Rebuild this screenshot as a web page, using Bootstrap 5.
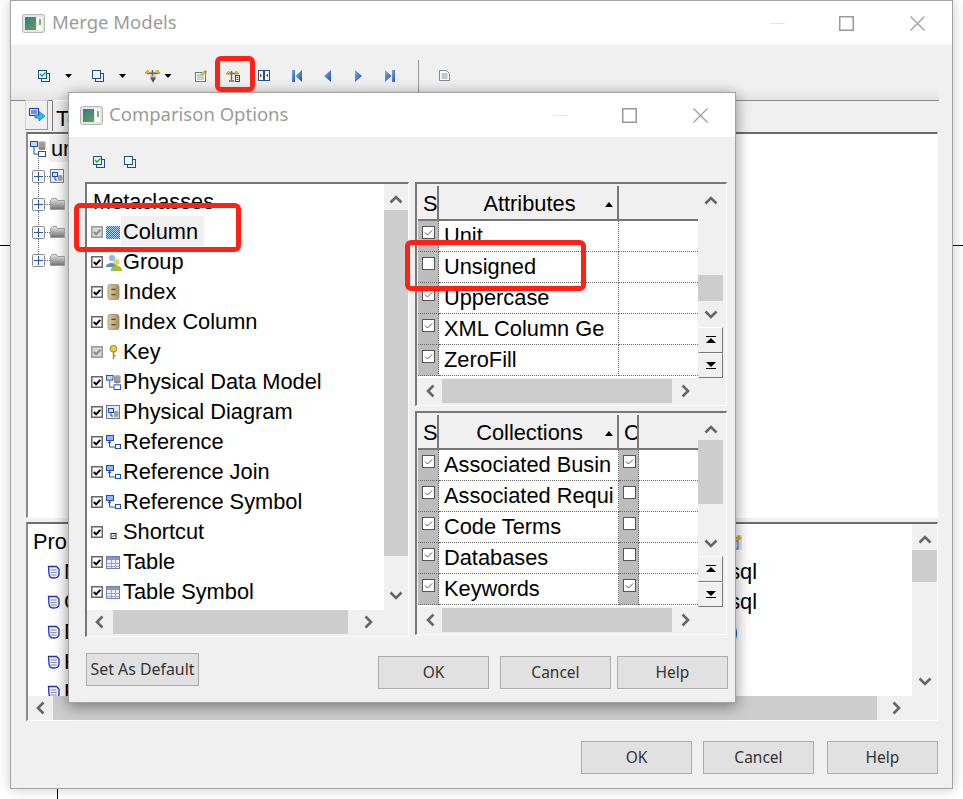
<!doctype html>
<html lang="en">
<head>
<meta charset="utf-8">
<title>Merge Models</title>
<link rel="stylesheet" href="https://cdn.jsdelivr.net/npm/bootstrap@5.3.0/dist/css/bootstrap.min.css">
<style>
html,body{margin:0;background:#fff;overflow:hidden;height:799px;}
body{font-family:"Liberation Sans",Arial,sans-serif;font-size:21.8px;line-height:1;color:#000;}
svg{display:block;flex:none;overflow:visible;}
.deskline{position:absolute;background:#000;}
.dl-v1{left:57px;top:0;width:1px;height:3px;}
.dl-v2{left:57px;top:788px;width:1px;height:11px;}
.dl-h1{left:0;top:245px;width:11px;height:1px;}
.dl-h2{left:952px;top:245px;width:11px;height:1px;}
.appwin{position:absolute;background:#f0f0f0;border:1px solid #a3a3a3;box-shadow:0 0 12px rgba(0,0,0,.22);}
.w-outer{left:10px;top:0;width:943px;height:789px;}
.w-dialog{left:68px;top:92px;width:668px;height:611px;box-shadow:0 3px 14px rgba(0,0,0,.45);}
.titlebar{height:44px;background:#fff;padding:0 27px 2px 11px;color:#9b9b9b;font-family:"Noto Sans",sans-serif;font-size:18.5px;flex:none;}
.titlebar svg{margin-top:2px;}
.ttl{margin-left:7px;}
.w-dialog .ttl{margin-left:6px;}
.wbtns{margin-left:auto;}
.wb-max{margin-left:54px;}
.wb-cls{margin-left:56px;}
.outer-tb{display:grid;height:56px;padding:6px 0 0 27px;align-items:center;margin-right:13px;border-bottom:1px solid #8a8a8a;
 grid-template-columns:27px 27px 27px 26px 19px 31px 31px 32px 34px 32px 31px 30px 33px 21px 1fr;
 background:linear-gradient(#f0f0f0 80%,#e4e4e4);}
.tbsep{width:1px;height:32px;background:#9a9a9a;align-self:start;margin-top:9px;}
.tabrow{height:31px;margin-left:14px;}
.tabtoggle{width:23px;height:30px;margin-top:-1px;background:#f0f0f0;border:1px solid #d0d0d0;border-right-color:#999;border-bottom-color:#999;}
.tabitem{margin-left:4px;height:31px;width:60px;margin-top:-1px;border-left:1px solid #777;border-top:1px solid #fff;padding:7px 0 0 3px;background:#f0f0f0;overflow:hidden;}
.pane{margin:0 14px 0 15px;border-top:2px solid #6c6c6c;border-left:2px solid #8b8b8b;border-right:1px solid #fff;border-bottom:1px solid #fff;}
.treepane{height:386px;background:#fff;padding:1px 0 0 0;}
.propspane{height:199px;margin-top:4px;}
.trow{height:28px;position:relative;padding-left:2px;}
.troot{height:27px;}
.troot .tlabel{background:#f0f0f0;height:27px;line-height:28px;padding:0 2px;margin-left:3px;}
.tchild{padding-left:4px;}
.tchild::before{content:"";position:absolute;left:10px;top:-7px;height:28px;border-left:1px dotted #666;}
.tchild::after{content:"";position:absolute;left:17px;top:14px;width:5px;border-top:1px dotted #666;}
.tlast::before{height:21px;}
.tchild svg{position:relative;z-index:1;}
.ticon{margin-left:5px;}
.propmain{min-height:0;}
.proplist{min-width:0;overflow:hidden;background:#fff;padding-top:3px;}
.prophead{height:30px;padding-left:5px;line-height:30px;width:714px;}
.proprow{height:30px;padding-left:19px;gap:4px;}
.pname{width:693px;}
.pval3{margin-right:19px;}
.vbar{background:#f0f0f0;flex:none;}
.vb-list{width:24px;}
.vb-grid{width:25px;}
.vb-props{width:25px;}
.arr{height:30px;flex:none;}
.arr-g{height:28px;}
.arr-h{width:24px;height:100%;flex:none;}
.arr-s{height:26px;}
.thumb{background:#cdcdcd;flex:none;}
.th-list{height:346px;margin-top:-4px;}
.th-g1{height:26px;margin-top:61px;}
.th-g2{height:64px;margin-top:-3px;}
.th-props{height:32px;margin-top:-4px;}
.dn-auto{margin-top:auto;}
.stepper{height:25.5px;width:25px;border-top:1px solid #fff;border-right:1px solid #777;border-bottom:1px solid #777;border-left:1px solid #eee;flex:none;}
.hbar{flex:none;height:24px;background:#f0f0f0;}
.hth-list{width:235px;margin-left:2px;}
.hth-grid{width:230px;}
.hth-props{width:824px;margin-left:1px;}
.ha-list{margin-left:8px;}
.ha-grid{margin-left:1px;}
.ha-props{margin-left:7px;}
.diatb{height:45px;padding:19px 0 0 24px;gap:19px;}
.diabody{padding:0 8px 0 16px;gap:6px;height:455px;}
.listframe{width:324px;height:455px;border-top:2px solid #777;border-left:2px solid #777;border-right:1px solid #fff;border-bottom:1px solid #fff;}
.listmain{height:426px;}
.listwhite{width:297px;background:#fff;padding-top:2px;overflow:hidden;}
.lhead{height:30px;line-height:32px;padding-left:6px;}
.lrow{height:30px;padding-left:4px;}
.lrow svg{margin-top:2px;}
.lck{margin-right:3px;}
.lico{width:15px;}
.lico-px{margin-right:1px;}
.lico-grp{width:16px;margin-right:-1px;}
.lico-sh{margin-top:9px !important;}
.ltext{height:30px;line-height:32px;padding:0 6px 0 2px;}
.lsel{background:#f0f0f0;}
.rightcol{width:312px;gap:5px;}
.gridframe{border-top:2px solid #777;border-left:2px solid #777;border-right:1px solid #fff;border-bottom:1px solid #fff;padding:2px 3px 2px 1px;}
.gridmain{height:192px;margin-bottom:1px;}
.gridbody{width:280px;background:#fff;overflow:hidden;}
.g-a,.g-c{display:grid;}
.g-a{grid-template-columns:21px 180px 1fr;}
.g-c{grid-template-columns:21px 180px 20px 1fr;}
.ghead{height:35px;background:#f0f0f0;border-bottom:2px solid #777;}
.ghead>div{border-right:2px solid #777;height:33px;line-height:36px;overflow:hidden;white-space:nowrap;}
.ghead>div:last-child{border-right:0;}
.hS{padding-left:5px;}
.hName{position:relative;text-align:center;padding-left:3px;}
.sorttri{position:absolute;right:4px;top:16px;width:0;height:0;border-left:4.5px solid transparent;border-right:4.5px solid transparent;border-bottom:5px solid #000;}
.grow>div{height:31px;border-bottom:1px dotted #666;border-right:1px dotted #666;}
.grow>div:last-child{border-right:0;}
.cgrey{background:#bcbcbc;padding:5px 0 0 4px;}
.cname{line-height:29px;padding-left:5px;white-space:nowrap;overflow:hidden;}
.diafoot{padding:16px 7px 0 17px;}
.uibtn{background:#e1e1e1;border:1px solid #adadad;border-radius:0;padding:0;color:#333;font-family:"Noto Sans",sans-serif;font-size:15.5px;line-height:1;height:33px;width:111px;}
.uibtn-wide{width:113px;font-size:15.9px;}
.footr{margin-left:auto;margin-top:3px;gap:11px;}
.gapH{margin-left:-5px;}
.outfoot{margin:20px 14px 0 0;gap:11px;}
.outhelp{margin-left:2px;}
.redbox{position:absolute;border:5.5px solid #ff2116;border-radius:6px;pointer-events:none;z-index:20;}
.rb1{left:215px;top:56px;width:40px;height:36px;}
.rb2{left:74px;top:203px;width:167px;height:49px;}
.rb3{left:405px;top:240px;width:181px;height:51px;}
</style>
</head>
<body>
<svg width="0" height="0" class="position-absolute">
 <defs>
  <pattern id="dith" width="2" height="2" patternUnits="userSpaceOnUse"><rect width="2" height="2" fill="#0f66cf"/><rect width="1" height="1" fill="#b8e0ff"/><rect x="1" y="1" width="1" height="1" fill="#b8e0ff"/></pattern>
  <linearGradient id="winG" x1="0" y1="0" x2="1" y2="1"><stop offset="0" stop-color="#2d7b93"/><stop offset="1" stop-color="#6da04a"/></linearGradient>
  <linearGradient id="navG" x1="0" y1="0" x2="1" y2="1"><stop offset="0" stop-color="#7fb0ea"/><stop offset="1" stop-color="#1f4fa8"/></linearGradient>
  <linearGradient id="fold" x1="0" y1="0" x2="0" y2="1"><stop offset="0" stop-color="#e8e8e8"/><stop offset="1" stop-color="#6f6f6f"/></linearGradient>
  <linearGradient id="tan" x1="0" y1="0" x2="1" y2="0"><stop offset="0" stop-color="#dccba6"/><stop offset="1" stop-color="#a88e60"/></linearGradient>
  <symbol id="winico" viewBox="0 0 23 19"><rect x=".5" y=".5" width="22" height="18" rx="2" fill="#e6e6e6" stroke="#b5b5b5"/><rect x="3" y="3" width="11" height="13" fill="url(#winG)"/><rect x="15" y="3" width="5" height="13" fill="#fff"/><rect x="17" y="5" width="2" height="6" fill="#7bb26a"/></symbol>
  <symbol id="copychk" viewBox="0 0 12 12"><rect x="3.500" y="3.500" width="8" height="8" fill="#f0f0f0" stroke="#1d4f8a"/><rect x=".5" y=".5" width="8" height="8" fill="#eaf6ea" stroke="#1d4f8a"/><path d="M2 4l2 2 3.500-3.500" fill="none" stroke="#22b02a" stroke-width="1.400"/></symbol>
  <symbol id="copyi" viewBox="0 0 12 12"><rect x="3.500" y="3.500" width="8" height="8" fill="#f0f0f0" stroke="#1d4f8a"/><rect x=".5" y=".5" width="8" height="8" fill="#f4f8fc" stroke="#1d4f8a"/></symbol>
  <symbol id="scale1" viewBox="0 0 14 13"><path d="M2 4h10M7 1v9" stroke="#666" stroke-width="1.500" fill="none"/><path d="M0 4l2.500-3 2.500 3z" fill="#f2c21a" stroke="#8a6d10" stroke-width=".5"/><path d="M9 4l2.500-3 2.500 3z" fill="#f2c21a" stroke="#8a6d10" stroke-width=".5"/><rect x="5" y="6" width="5" height="4" fill="#bbb"/><path d="M5 8h5l-2.500 5z" fill="#555"/></symbol>
  <symbol id="scale2" viewBox="0 0 14 12"><path d="M1 3.500h9M5.500 1v9M3 11h5" stroke="#666" stroke-width="1.400" fill="none"/><path d="M0 4l2.500-3 2.500 3z" fill="#f2c21a" stroke="#8a6d10" stroke-width=".5"/><path d="M8 4l2.500-3 2.500 3z" fill="#f2c21a" stroke="#8a6d10" stroke-width=".5"/><rect x="9.500" y="5.500" width="4" height="6" fill="#fff" stroke="#1d4f8a"/><path d="M10.500 7.500h2M10.500 9.500h2" stroke="#1d4f8a"/></symbol>
  <symbol id="report" viewBox="0 0 12 12"><rect x=".5" y="2.500" width="10" height="9" fill="#fff" stroke="#5c7c9c"/><path d="M2 5h7M2 7h7M2 9h7" stroke="#8aa"/><path d="M5 4l5-4 2 2-5 4z" fill="#d8b64a"/><path d="M10 0l2 2-2 2z" fill="#62a63a"/></symbol>
  <symbol id="cmp" viewBox="0 0 12 11"><rect x=".5" y=".5" width="5" height="10" fill="#fff" stroke="#1d4f8a"/><rect x="6.500" y=".5" width="5" height="10" fill="#fff" stroke="#1d4f8a"/><path d="M2 3.500l2 2-2 2zM10 3.500l-2 2 2 2z" fill="#d81818"/></symbol>
  <symbol id="nfirst" viewBox="0 0 10 12"><rect x="0" y="0" width="3" height="12" fill="url(#navG)"/><path d="M10 0v12L3.500 6z" fill="url(#navG)"/></symbol>
  <symbol id="nprev" viewBox="0 0 7 12"><path d="M7 0v12L0 6z" fill="url(#navG)"/></symbol>
  <symbol id="nnext" viewBox="0 0 7 12"><path d="M0 0v12L7 6z" fill="url(#navG)"/></symbol>
  <symbol id="nlast" viewBox="0 0 10 12"><rect x="7" y="0" width="3" height="12" fill="url(#navG)"/><path d="M0 0v12L6.500 6z" fill="url(#navG)"/></symbol>
  <symbol id="docg" viewBox="0 0 11 11"><path d="M.5.5h7l3 3v7H.5z" fill="#fafafa" stroke="#7f8a96"/><path d="M2.500 4h6M2.500 6h6M2.500 8h6" stroke="#8b96a3"/></symbol>
  <symbol id="togg" viewBox="0 0 16 14"><rect x=".5" y=".5" width="9" height="7" fill="#cfe0f8" stroke="#1c40b0"/><path d="M2 3h6M2 5h6" stroke="#1c40b0"/><path d="M6 7h4V3.500L16 8l-6 5V10H6z" fill="#1fc3f0" stroke="#1565b8" stroke-width=".7"/></symbol>
  <symbol id="pdm" viewBox="0 0 16 16"><rect x=".5" y=".5" width="7" height="5" fill="#bcd6f7" stroke="#1c4fb0"/><rect x="8.500" y="10.500" width="7" height="5" fill="#fff" stroke="#1c4fb0"/><path d="M4 6v7h4" fill="none" stroke="#1c4fb0"/><ellipse cx="12" cy="1.500" rx="3.500" ry="1.500" fill="#b5b5b5"/><rect x="8.500" y="1.500" width="7" height="6" fill="#9e9e9e"/><ellipse cx="12" cy="7.500" rx="3.500" ry="1.500" fill="#8a8a8a"/></symbol>
  <symbol id="pdiag" viewBox="0 0 14 14"><rect x=".5" y=".5" width="13" height="13" fill="#e6ecf2" stroke="#6c7c8c"/><rect x="2.500" y="3.500" width="5" height="4" fill="#cfe0f8" stroke="#1c4fb0"/><path d="M5 8v3h2" fill="none" stroke="#1c4fb0"/><rect x="8" y="6" width="4.500" height="6" rx="1" fill="#9e9e9e"/></symbol>
  <symbol id="refi" viewBox="0 0 15 15"><rect x=".5" y=".5" width="7" height="5" fill="#8fb8f0" stroke="#1c4fb0"/><rect x="9.500" y="9.500" width="5" height="4" fill="#fff" stroke="#1c4fb0"/><path d="M3.500 6v6h6M2 8l1.500-2 1.500 2" fill="none" stroke="#1c4fb0"/></symbol>
  <symbol id="colico" viewBox="0 0 14 13"><rect width="14" height="13" fill="url(#dith)"/></symbol>
  <symbol id="grpi" viewBox="0 0 16 17"><circle cx="6" cy="4" r="3" fill="#8ab8ec"/><path d="M0 12c1-4 10-4 11 0v1H0z" fill="#4f8fd8"/><circle cx="10.500" cy="8" r="3" fill="#e6d25a"/><path d="M5 16c0-6 10-6 11 0v1H5z" fill="#a9b83c"/></symbol>
  <symbol id="idx" viewBox="0 0 11 15"><rect x=".3" y=".3" width="10.400" height="14.400" rx="2.500" fill="url(#tan)" stroke="#8a7a58" stroke-width=".6"/><path d="M3.500 5h4M3.500 10h4" stroke="#5a4a2a" stroke-width="1.200"/></symbol>
  <symbol id="keyi" viewBox="0 0 8 13"><circle cx="4" cy="3.500" r="3" fill="#f2c84a" stroke="#b08a20"/><path d="M4 6v7M4 10h2" stroke="#b08a20" stroke-width="1.400"/></symbol>
  <symbol id="shct" viewBox="0 0 6 6"><rect x=".5" y=".5" width="5" height="5" fill="#eee" stroke="#223"/><path d="M2 4l2-2" stroke="#123" stroke-width=".8"/></symbol>
  <symbol id="tbl" viewBox="0 0 14 13"><rect x=".5" y=".5" width="13" height="12" fill="#e9eefa" stroke="#6f7fb0"/><rect x="1" y="1" width="12" height="3" fill="#8896cc"/><path d="M1 7.500h12M1 10.500h12M5.500 4v8M9.500 4v8" stroke="#9aa8c8"/></symbol>
  <symbol id="cb-b" viewBox="0 0 12 12"><rect x=".75" y=".75" width="10.500" height="10.500" fill="#fff" stroke="#666" stroke-width="1.500"/><path d="M2.800 6l2.300 2.400 4.200-4.600" fill="none" stroke="#000" stroke-width="2"/></symbol>
  <symbol id="cb-g" viewBox="0 0 12 12"><rect x=".75" y=".75" width="10.500" height="10.500" fill="#d8d8d8" stroke="#999" stroke-width="1.500"/><path d="M2.800 6l2.300 2.400 4.200-4.600" fill="none" stroke="#888" stroke-width="2"/></symbol>
  <symbol id="cb-t" viewBox="0 0 13 13"><rect x=".5" y=".5" width="12" height="12" fill="#fff" stroke="#555"/><path d="M3 6.500l2.500 2.500 4.500-4.500" fill="none" stroke="#555"/></symbol>
  <symbol id="cb-e" viewBox="0 0 13 13"><rect x=".5" y=".5" width="12" height="12" fill="#fff" stroke="#555"/></symbol>
  <symbol id="plusb" viewBox="0 0 13 13"><rect x=".5" y=".5" width="12" height="12" rx="1" fill="#f6f6f6" stroke="#8a8a8a"/><path d="M2 6.500h9M6.500 2v9" stroke="#2a55a8"/></symbol>
  <symbol id="folder" viewBox="0 0 15 12"><path d="M.5 11.500V2.500l2-2h4l1 2h7v9z" fill="url(#fold)" stroke="#9a9a9a"/></symbol>
  <symbol id="propdoc" viewBox="0 0 13 14"><path d="M1.500 1.500h8l2.500 2.500v5c0 3-2 4-5 4s-5-1-5-4z" fill="#eef0f5" stroke="#2230c0" stroke-width="1.300"/><path d="M3.500 5h6M3.500 7.500h6M3.500 10h6" stroke="#8a8fa0"/></symbol>
  <symbol id="phead" viewBox="0 0 15 15"><rect x="0" y="0" width="15" height="15" fill="#e6e9d8"/><path d="M8 3l4-3 3 3-4 3z" fill="#d8a82a"/><rect x="4" y="6" width="7" height="8" fill="#cfdcf0" stroke="#3d6aa8"/></symbol>
  <symbol id="chU" viewBox="0 0 14 9"><path d="M1.500 7.500L7 2l5.500 5.500" fill="none" stroke="#666" stroke-width="2.600"/></symbol>
  <symbol id="chD" viewBox="0 0 14 9"><path d="M1.500 1.500L7 7l5.500-5.500" fill="none" stroke="#666" stroke-width="2.600"/></symbol>
  <symbol id="chL" viewBox="0 0 9 14"><path d="M7.500 1.500L2 7l5.500 5.500" fill="none" stroke="#666" stroke-width="2.600"/></symbol>
  <symbol id="chR" viewBox="0 0 9 14"><path d="M1.500 1.500L7 7l-5.500 5.500" fill="none" stroke="#666" stroke-width="2.600"/></symbol>
  <symbol id="ddn" viewBox="0 0 7 4"><path d="M0 0h7L3.500 4z" fill="#000"/></symbol>
  <symbol id="stTop" viewBox="0 0 10 8"><path d="M0 0h10v1H0zM5 2l5 5H0z" fill="#000"/></symbol>
  <symbol id="stBot" viewBox="0 0 10 8"><path d="M0 1h10L5 6zM0 7h10v1H0z" fill="#000"/></symbol>
  <symbol id="wmin" viewBox="0 0 15 1"><rect width="15" height="1" fill="#e6e6e6"/></symbol>
  <symbol id="wmax" viewBox="0 0 15 15"><rect x=".75" y=".75" width="13.500" height="13.500" fill="none" stroke="#999" stroke-width="1.500"/></symbol>
  <symbol id="wcls" viewBox="0 0 15 15"><path d="M.5.500l14 14M14.500.500l-14 14" stroke="#999" stroke-width="1.100"/></symbol>
 </defs>
</svg>

<div class="deskline dl-v1"></div><div class="deskline dl-v2"></div><div class="deskline dl-h1"></div><div class="deskline dl-h2"></div>

<div class="appwin w-outer d-flex flex-column">
 <div class="titlebar d-flex align-items-center">
  <svg width="23" height="19"><use href="#winico"/></svg><span class="ttl">Merge Models</span>
  <div class="wbtns d-flex align-items-center"><svg width="15" height="1"><use href="#wmin"/></svg><svg class="wb-max" width="15" height="15"><use href="#wmax"/></svg><svg class="wb-cls" width="15" height="15"><use href="#wcls"/></svg></div>
 </div>
 <div class="outer-tb">
  <svg width="12" height="12"><use href="#copychk"/></svg>
  <svg width="7" height="4"><use href="#ddn"/></svg>
  <svg width="12" height="12"><use href="#copyi"/></svg>
  <svg width="7" height="4"><use href="#ddn"/></svg>
  <svg width="15" height="14"><use href="#scale1"/></svg>
  <svg width="8" height="4"><use href="#ddn"/></svg>
  <svg width="12" height="12"><use href="#report"/></svg>
  <svg width="14" height="12"><use href="#scale2"/></svg>
  <svg width="12" height="11"><use href="#cmp"/></svg>
  <svg width="10" height="12"><use href="#nfirst"/></svg>
  <svg width="7" height="12"><use href="#nprev"/></svg>
  <svg width="7" height="12"><use href="#nnext"/></svg>
  <svg width="10" height="12"><use href="#nlast"/></svg>
  <div class="tbsep"></div>
  <svg width="11" height="11"><use href="#docg"/></svg>
 </div>
 <div class="tabrow d-flex">
  <div class="tabtoggle d-flex align-items-center justify-content-center"><svg width="16" height="14"><use href="#togg"/></svg></div>
  <div class="tabitem">Te</div>
 </div>
 <div class="pane treepane">
  <div class="trow troot d-flex align-items-center"><svg width="16" height="16"><use href="#pdm"/></svg><span class="tlabel">ur</span></div>
  <div class="trow tchild d-flex align-items-center"><svg width="13" height="13"><use href="#plusb"/></svg><svg class="ticon" width="14" height="14"><use href="#pdiag"/></svg></div>
  <div class="trow tchild d-flex align-items-center"><svg width="13" height="13"><use href="#plusb"/></svg><svg class="ticon" width="15" height="12"><use href="#folder"/></svg></div>
  <div class="trow tchild d-flex align-items-center"><svg width="13" height="13"><use href="#plusb"/></svg><svg class="ticon" width="15" height="12"><use href="#folder"/></svg></div>
  <div class="trow tchild tlast d-flex align-items-center"><svg width="13" height="13"><use href="#plusb"/></svg><svg class="ticon" width="15" height="12"><use href="#folder"/></svg></div>
 </div>
 <div class="pane propspane d-flex flex-column">
  <div class="propmain d-flex flex-grow-1">
   <div class="proplist flex-grow-1">
    <div class="prophead d-flex justify-content-between align-items-center"><span>Pro</span><svg width="15" height="15"><use href="#phead"/></svg></div>
    <div class="proprow d-flex align-items-center"><svg width="13" height="14"><use href="#propdoc"/></svg><div class="pname d-flex justify-content-between"><span>N</span><span>sql</span></div></div>
    <div class="proprow d-flex align-items-center"><svg width="13" height="14"><use href="#propdoc"/></svg><div class="pname d-flex justify-content-between"><span>C</span><span>sql</span></div></div>
    <div class="proprow d-flex align-items-center"><svg width="13" height="14"><use href="#propdoc"/></svg><div class="pname d-flex justify-content-between"><span>D</span><span class="pval3">)</span></div></div>
    <div class="proprow d-flex align-items-center"><svg width="13" height="14"><use href="#propdoc"/></svg><div class="pname"><span>K</span></div></div>
    <div class="proprow d-flex align-items-center"><svg width="13" height="14"><use href="#propdoc"/></svg><div class="pname"><span>P</span></div></div>
   </div>
   <div class="vbar vb-props d-flex flex-column align-items-center">
    <div class="arr d-flex align-items-center justify-content-center"><svg width="14" height="9"><use href="#chU"/></svg></div>
    <div class="thumb th-props w-100"></div>
    <div class="arr dn-auto d-flex align-items-center justify-content-center"><svg width="14" height="9"><use href="#chD"/></svg></div>
   </div>
  </div>
  <div class="hbar d-flex">
   <div class="arr-h d-flex align-items-center justify-content-center"><svg width="9" height="14"><use href="#chL"/></svg></div>
   <div class="thumb hth-props"></div>
   <div class="arr-h ha-props d-flex align-items-center justify-content-center"><svg width="9" height="14"><use href="#chR"/></svg></div>
  </div>
 </div>
 <div class="outfoot d-flex justify-content-end">
  <button class="btn uibtn" type="button">OK</button>
  <button class="btn uibtn" type="button">Cancel</button>
  <button class="btn uibtn outhelp" type="button">Help</button>
 </div>
</div>

<div class="appwin w-dialog d-flex flex-column">
 <div class="titlebar d-flex align-items-center">
  <svg width="23" height="19"><use href="#winico"/></svg><span class="ttl">Comparison Options</span>
  <div class="wbtns d-flex align-items-center"><svg width="15" height="1"><use href="#wmin"/></svg><svg class="wb-max" width="15" height="15"><use href="#wmax"/></svg><svg class="wb-cls" width="15" height="15"><use href="#wcls"/></svg></div>
 </div>
 <div class="diatb d-flex">
  <svg width="12" height="12"><use href="#copychk"/></svg>
  <svg width="12" height="12"><use href="#copyi"/></svg>
 </div>
 <div class="diabody d-flex">
  <div class="listframe d-flex flex-column">
   <div class="listmain d-flex">
    <div class="listwhite">
     <div class="lhead">Metaclasses</div>
     <div class="lrow d-flex align-items-center"><svg class="lck" width="12" height="12"><use href="#cb-g"/></svg><svg class="lico-px" width="14" height="13"><use href="#colico"/></svg><span class="ltext lsel">Column</span></div>
     <div class="lrow d-flex align-items-center"><svg class="lck" width="12" height="12"><use href="#cb-b"/></svg><svg class="lico-grp" width="16" height="17"><use href="#grpi"/></svg><span class="ltext">Group</span></div>
     <div class="lrow d-flex align-items-center"><svg class="lck" width="12" height="12"><use href="#cb-b"/></svg><svg class="lico" width="15" height="16"><use href="#idx"/></svg><span class="ltext">Index</span></div>
     <div class="lrow d-flex align-items-center"><svg class="lck" width="12" height="12"><use href="#cb-b"/></svg><svg class="lico" width="15" height="16"><use href="#idx"/></svg><span class="ltext">Index Column</span></div>
     <div class="lrow d-flex align-items-center"><svg class="lck" width="12" height="12"><use href="#cb-g"/></svg><svg class="lico" width="15" height="14"><use href="#keyi"/></svg><span class="ltext">Key</span></div>
     <div class="lrow d-flex align-items-center"><svg class="lck" width="12" height="12"><use href="#cb-b"/></svg><svg class="lico" width="15" height="15"><use href="#pdm"/></svg><span class="ltext">Physical Data Model</span></div>
     <div class="lrow d-flex align-items-center"><svg class="lck" width="12" height="12"><use href="#cb-b"/></svg><svg class="lico-px" width="14" height="14"><use href="#pdiag"/></svg><span class="ltext">Physical Diagram</span></div>
     <div class="lrow d-flex align-items-center"><svg class="lck" width="12" height="12"><use href="#cb-b"/></svg><svg class="lico" width="15" height="15"><use href="#refi"/></svg><span class="ltext">Reference</span></div>
     <div class="lrow d-flex align-items-center"><svg class="lck" width="12" height="12"><use href="#cb-b"/></svg><svg class="lico" width="15" height="15"><use href="#refi"/></svg><span class="ltext">Reference Join</span></div>
     <div class="lrow d-flex align-items-center"><svg class="lck" width="12" height="12"><use href="#cb-b"/></svg><svg class="lico" width="15" height="15"><use href="#refi"/></svg><span class="ltext">Reference Symbol</span></div>
     <div class="lrow d-flex align-items-center"><svg class="lck" width="12" height="12"><use href="#cb-b"/></svg><svg class="lico lico-sh" width="15" height="6" preserveAspectRatio="xMinYMid"><use href="#shct"/></svg><span class="ltext">Shortcut</span></div>
     <div class="lrow d-flex align-items-center"><svg class="lck" width="12" height="12"><use href="#cb-b"/></svg><svg class="lico-px" width="14" height="13"><use href="#tbl"/></svg><span class="ltext">Table</span></div>
     <div class="lrow d-flex align-items-center"><svg class="lck" width="12" height="12"><use href="#cb-b"/></svg><svg class="lico-px" width="14" height="13"><use href="#tbl"/></svg><span class="ltext">Table Symbol</span></div>
    </div>
    <div class="vbar vb-list d-flex flex-column">
     <div class="arr d-flex align-items-center justify-content-center"><svg width="14" height="9"><use href="#chU"/></svg></div>
     <div class="thumb th-list"></div>
     <div class="arr dn-auto d-flex align-items-center justify-content-center"><svg width="14" height="9"><use href="#chD"/></svg></div>
    </div>
   </div>
   <div class="hbar d-flex">
    <div class="arr-h d-flex align-items-center justify-content-center"><svg width="9" height="14"><use href="#chL"/></svg></div>
    <div class="thumb hth-list"></div>
    <div class="arr-h ha-list d-flex align-items-center justify-content-center"><svg width="9" height="14"><use href="#chR"/></svg></div>
   </div>
  </div>
  <div class="rightcol d-flex flex-column">
   <div class="gridframe">
    <div class="gridmain d-flex">
     <div class="gridbody">
      <div class="g-a ghead"><div class="hS">S</div><div class="hName">Attributes<i class="sorttri"></i></div><div></div></div>
      <div class="g-a grow"><div class="cgrey"><svg width="13" height="13"><use href="#cb-t"/></svg></div><div class="cname">Unit</div><div></div></div>
      <div class="g-a grow"><div class="cgrey"><svg width="13" height="13"><use href="#cb-e"/></svg></div><div class="cname">Unsigned</div><div></div></div>
      <div class="g-a grow"><div class="cgrey"><svg width="13" height="13"><use href="#cb-t"/></svg></div><div class="cname">Uppercase</div><div></div></div>
      <div class="g-a grow"><div class="cgrey"><svg width="13" height="13"><use href="#cb-t"/></svg></div><div class="cname">XML Column Ge</div><div></div></div>
      <div class="g-a grow"><div class="cgrey"><svg width="13" height="13"><use href="#cb-t"/></svg></div><div class="cname">ZeroFill</div><div></div></div>
     </div>
     <div class="vbar vb-grid d-flex flex-column">
      <div class="arr arr-g d-flex align-items-center justify-content-center"><svg width="14" height="9"><use href="#chU"/></svg></div>
      <div class="thumb th-g1"></div>
      <div class="arr arr-s d-flex align-items-center justify-content-center"><svg width="14" height="9"><use href="#chD"/></svg></div>
      <div class="stepper d-flex align-items-center justify-content-center"><svg width="10" height="8"><use href="#stTop"/></svg></div>
      <div class="stepper d-flex align-items-center justify-content-center"><svg width="10" height="8"><use href="#stBot"/></svg></div>
     </div>
    </div>
    <div class="hbar d-flex">
     <div class="arr-h d-flex align-items-center justify-content-center"><svg width="9" height="14"><use href="#chL"/></svg></div>
     <div class="thumb hth-grid"></div>
     <div class="arr-h ha-grid d-flex align-items-center justify-content-center"><svg width="9" height="14"><use href="#chR"/></svg></div>
    </div>
   </div>
   <div class="gridframe">
    <div class="gridmain d-flex">
     <div class="gridbody">
      <div class="g-c ghead"><div class="hS">S</div><div class="hName">Collections<i class="sorttri"></i></div><div class="hS">C</div><div></div></div>
      <div class="g-c grow"><div class="cgrey"><svg width="13" height="13"><use href="#cb-t"/></svg></div><div class="cname">Associated Busin</div><div class="cgrey"><svg width="13" height="13"><use href="#cb-t"/></svg></div><div></div></div>
      <div class="g-c grow"><div class="cgrey"><svg width="13" height="13"><use href="#cb-t"/></svg></div><div class="cname">Associated Requi</div><div class="cgrey"><svg width="13" height="13"><use href="#cb-e"/></svg></div><div></div></div>
      <div class="g-c grow"><div class="cgrey"><svg width="13" height="13"><use href="#cb-t"/></svg></div><div class="cname">Code Terms</div><div class="cgrey"><svg width="13" height="13"><use href="#cb-e"/></svg></div><div></div></div>
      <div class="g-c grow"><div class="cgrey"><svg width="13" height="13"><use href="#cb-t"/></svg></div><div class="cname">Databases</div><div class="cgrey"><svg width="13" height="13"><use href="#cb-e"/></svg></div><div></div></div>
      <div class="g-c grow"><div class="cgrey"><svg width="13" height="13"><use href="#cb-t"/></svg></div><div class="cname">Keywords</div><div class="cgrey"><svg width="13" height="13"><use href="#cb-t"/></svg></div><div></div></div>
     </div>
     <div class="vbar vb-grid d-flex flex-column">
      <div class="arr arr-g d-flex align-items-center justify-content-center"><svg width="14" height="9"><use href="#chU"/></svg></div>
      <div class="thumb th-g2"></div>
      <div class="arr arr-s dn-auto d-flex align-items-center justify-content-center"><svg width="14" height="9"><use href="#chD"/></svg></div>
      <div class="stepper d-flex align-items-center justify-content-center"><svg width="10" height="8"><use href="#stTop"/></svg></div>
      <div class="stepper d-flex align-items-center justify-content-center"><svg width="10" height="8"><use href="#stBot"/></svg></div>
     </div>
    </div>
    <div class="hbar d-flex">
     <div class="arr-h d-flex align-items-center justify-content-center"><svg width="9" height="14"><use href="#chL"/></svg></div>
     <div class="thumb hth-grid"></div>
     <div class="arr-h ha-grid d-flex align-items-center justify-content-center"><svg width="9" height="14"><use href="#chR"/></svg></div>
    </div>
   </div>
  </div>
 </div>
 <div class="diafoot d-flex align-items-start">
  <button class="btn uibtn uibtn-wide" type="button">Set As Default</button>
  <div class="footr d-flex">
   <button class="btn uibtn" type="button">OK</button>
   <button class="btn uibtn" type="button">Cancel</button>
   <button class="btn uibtn gapH" type="button">Help</button>
  </div>
 </div>
</div>

<div class="redbox rb1"></div><div class="redbox rb2"></div><div class="redbox rb3"></div>
<script src="https://cdn.jsdelivr.net/npm/bootstrap@5.3.0/dist/js/bootstrap.bundle.min.js"></script>
</body>
</html>
